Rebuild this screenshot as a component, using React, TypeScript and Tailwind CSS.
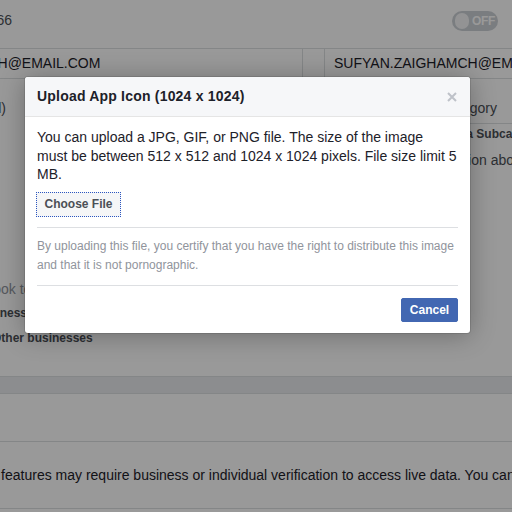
export default function App() {
  return (
    <div className="relative h-[512px] w-[512px] overflow-hidden bg-white font-['Liberation_Sans',Arial,sans-serif] text-[14px] text-[#1d2129]">
      {/* page behind the dialog */}
      <div className="-ml-[145px] w-[657px]">
        <div className="flex h-[49px] items-start justify-between border-b border-[#dddfe2] pt-[11px]">
          <div className="w-[157px] shrink-0 text-right leading-[18px] text-[#4b4f56]">+92 300 1234566</div>
          <div className="mr-[14px] flex h-[20px] w-[46px] items-center rounded-full bg-[#ccd0d5] px-[3px]">
            <div className="h-[16px] w-[16px] rounded-full bg-[#f5f6f7]" />
            <span className="ml-[3px] text-[12px] font-bold tracking-tight text-white">OFF</span>
          </div>
        </div>

        <div className="flex h-[30px] items-center border-b border-[#dddfe2]">
          <div className="flex h-full w-[447px] shrink-0 items-center pl-[9px] whitespace-nowrap">
            SUFYAN.ZAIGHAMCH@EMAIL.COM
          </div>
          <div className="h-full w-[22px] shrink-0 border-l border-[#dddfe2]" />
          <div className="flex h-full min-w-0 flex-1 items-center overflow-hidden border-l border-[#dddfe2] pl-[9px] whitespace-nowrap">
            SUFYAN.ZAIGHAMCH@EMAIL.COM
          </div>
        </div>

        <div className="flex h-[297px]">
          <div className="w-[469px] shrink-0 text-[#4b4f56]">
            <div className="w-[151px] pt-[20px] text-right leading-[18px]">Contact (optional)</div>
            <div className="pt-[163px] pl-[62px] leading-[18px] whitespace-nowrap text-[#90949c]">
              Allow Facebook to use this information for businesses
            </div>
            <div className="pt-[6px] pl-[100px] text-[12px] leading-[18px] font-bold whitespace-nowrap">
              My business
            </div>
            <div className="pt-[7px] pl-[137px] text-[12px] leading-[18px] font-bold whitespace-nowrap">
              Other businesses
            </div>
          </div>
          <div className="min-w-0 flex-1 overflow-hidden whitespace-nowrap">
            <div className="h-[45px] border-b border-[#dddfe2] pt-[20px] pl-[1px] leading-[18px] text-[#4b4f56]">
              Select a Business Category
            </div>
            <div className="pt-[1px] pl-[95px] text-[12px] leading-[18px] font-bold text-[#4b4f56]">
              Choose a Subcategory
            </div>
            <div className="pt-[8px] pl-[18px] leading-[18px] text-[#4b4f56]">Learn more information about categories</div>
          </div>
        </div>

        <div className="h-[18px] border-y border-[#dddfe2] bg-[#e9ebee]" />
        <div className="h-[48px] border-b border-[#dddfe2]" />
        <div className="flex h-[67px] items-center border-b border-[#dddfe2] pl-[41px] whitespace-nowrap">
          <span className="text-[#4267b2]">Some advanced</span>
          <span>&nbsp;features may require business or individual verification to access live data. You can</span>
        </div>
      </div>

      {/* dim layer */}
      <div className="absolute inset-0 bg-black/40" />

      {/* dialog */}
      <div className="absolute top-[77px] left-[25px] w-[445px] rounded-[3px] bg-white shadow-[0_2px_26px_rgba(0,0,0,0.3),0_0_0_1px_rgba(0,0,0,0.1)]">
        <div className="flex h-[40px] items-center justify-between rounded-t-[3px] border-b border-[#e5e5e5] bg-[#f6f7f9] pr-[13px] pl-[12px]">
          <span className="text-[14px] font-bold tracking-[0.2px] text-[#1d2129]">Upload App Icon (1024 x 1024)</span>
          <svg width="10" height="10" viewBox="0 0 10 10">
            <path d="M1 1L9 9M9 1L1 9" stroke="#bec2c9" strokeWidth="2" />
          </svg>
        </div>
        <div className="px-[12px] pt-[11px]">
          <p className="leading-[18.5px] whitespace-nowrap text-[#1d2129]">
            You can upload a JPG, GIF, or PNG file. The size of the image
            <br />
            must be between 512 x 512 and 1024 x 1024 pixels. File size limit 5
            <br />
            MB.
          </p>
          <button className="mt-[8px] -ml-[1px] flex h-[25px] w-[85px] items-center justify-center border border-dotted border-[#2b55c0] bg-[#f5f6f7] text-[12px] font-bold text-[#4b4f56]">
            Choose File
          </button>
          <div className="mt-[10px] border-t border-[#dddfe2] pt-[9px] pb-[10px]">
            <p className="text-[12px] leading-[19px] whitespace-nowrap text-[#90949c]">
              By uploading this file, you certify that you have the right to distribute this image
              <br />
              and that it is not pornographic.
            </p>
          </div>
          <div className="flex justify-end border-t border-[#dddfe2] pt-[12px] pb-[11px]">
            <button className="flex h-[24px] w-[57px] items-center justify-center rounded-[2px] border border-[#4267b2] bg-[#4267b2] text-[12px] font-bold text-white">
              Cancel
            </button>
          </div>
        </div>
      </div>
    </div>
  );
}
